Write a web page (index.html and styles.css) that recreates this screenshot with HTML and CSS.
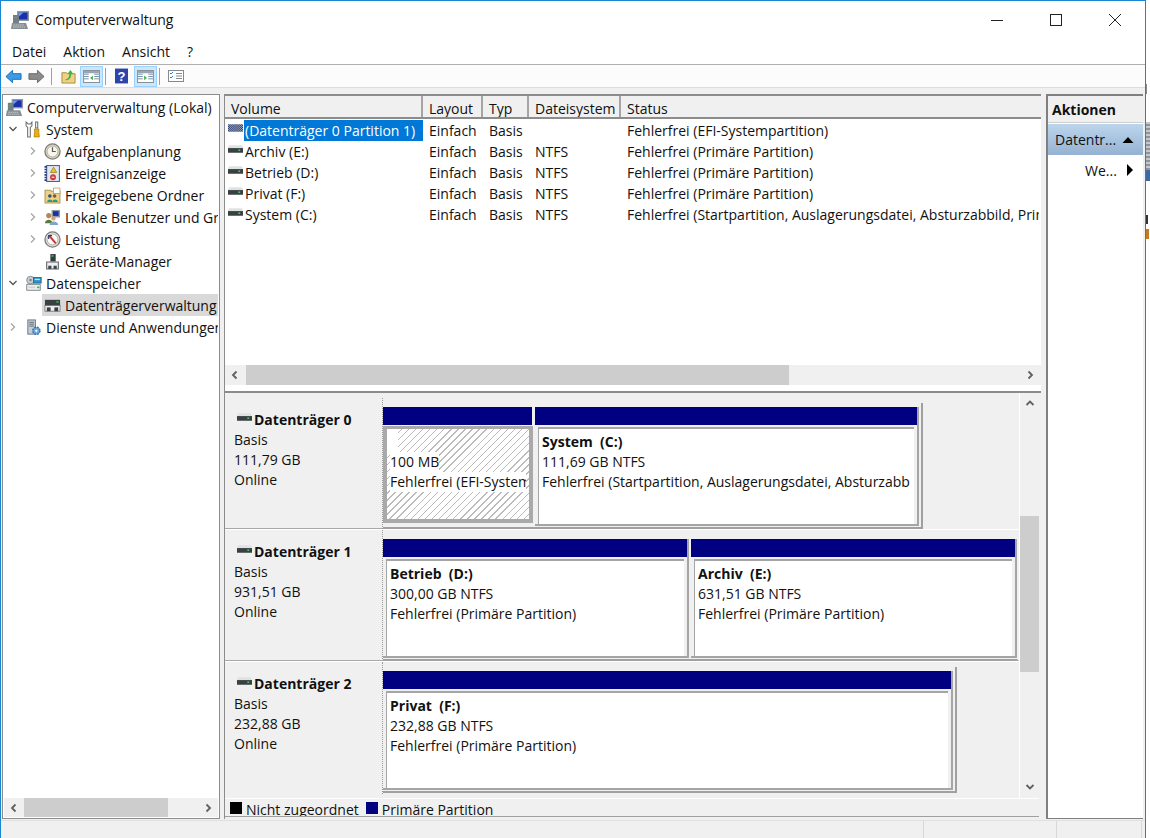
FILE: index.html
```html
<!DOCTYPE html>
<html lang="de">
<head>
<meta charset="utf-8">
<title>Computerverwaltung</title>
<link rel="stylesheet" href="styles.css">
</head>
<body>
<svg class="defs" width="0" height="0">
  <defs>
    <symbol id="i-comp" viewBox="0 0 20 20">
      <rect x="7" y="1" width="12" height="10" fill="#8c9aa8"/>
      <rect x="8.500" y="2.500" width="9" height="7" fill="#1c2fa8"/>
      <path d="M8.500 2.500h5l-5 4.500z" fill="#6f9be6"/>
      <rect x="3" y="5" width="6" height="9" fill="#6f7f84"/>
      <rect x="4" y="7" width="3" height="1" fill="#35c060"/>
      <path d="M2 13h14l2 6H1z" fill="#868d93"/>
      <path d="M3.500 15h11M3 17h12" stroke="#c9ced1" stroke-dasharray="1.500 .7"/>
    </symbol>
    <symbol id="i-tools" viewBox="0 0 16 16">
      <path d="M1 1v3.500l1.500 1.500V15h2.500V6l1.500-1.500V1L5 2.800H3z" fill="#fff" stroke="#6f6f6f"/>
      <path d="M10 1h2v5.500h-2z" fill="#fff" stroke="#6f6f6f"/>
      <path d="M9 7.500h4v3l.5 4.500h-5L9 10.500z" fill="#eeae0e" stroke="#a87f08" stroke-width=".7"/>
    </symbol>
    <symbol id="i-clock" viewBox="0 0 18 18">
      <circle cx="9" cy="9" r="8" fill="#ddd6be" stroke="#7d7d7d" stroke-width="1.400"/>
      <circle cx="9" cy="9" r="5.800" fill="#f7f5ec" stroke="#b5ad90"/>
      <path d="M9 4.500V9h3.500" fill="none" stroke="#4f5f6f" stroke-width="1.300"/>
    </symbol>
    <symbol id="i-event" viewBox="0 0 16 16">
      <rect x="2.500" y=".5" width="12" height="15" fill="#dfe7f3" stroke="#4c5f96"/>
      <path d="M1.500 1v14" stroke="#23356f" stroke-width="2" stroke-dasharray="1.500 1"/>
      <path d="M9 2l3 5H6z" fill="#f2c230" stroke="#9a7a14" stroke-width=".7"/>
      <circle cx="8.500" cy="11.500" r="2.800" fill="#d33a3a"/>
      <path d="M7.200 11.500h2.600" stroke="#fff"/>
    </symbol>
    <symbol id="i-share" viewBox="0 0 16 16">
      <path d="M1 3h5l1 1h8v11H1z" fill="#ecd288" stroke="#b39a52"/>
      <rect x="9" y="1" width="6" height="5" fill="#fff" stroke="#b39a52" stroke-width=".7"/>
      <circle cx="5.500" cy="8.500" r="1.700" fill="#33527f"/>
      <circle cx="10" cy="8.500" r="1.700" fill="#7a5a35"/>
      <path d="M3 14c0-3 5-3 5 0zM8 14c0-3 5-3 5 0z" fill="#2f9a7f"/>
    </symbol>
    <symbol id="i-users" viewBox="0 0 18 18">
      <rect x="8" y="1" width="9" height="8" fill="#8c9aa8"/>
      <rect x="9.500" y="2.300" width="6" height="5" fill="#1c2fa8"/>
      <circle cx="5" cy="7" r="2.700" fill="#b48650"/>
      <path d="M1 15c0-5 8-5 8 0z" fill="#5b7a3a"/>
      <circle cx="10" cy="10" r="2.300" fill="#d2a56f"/>
      <path d="M6 17c0-5 9-5 9 0z" fill="#7fa4cf"/>
    </symbol>
    <symbol id="i-perf" viewBox="0 0 18 18">
      <circle cx="9" cy="9" r="8" fill="#e4e4de" stroke="#7d7d7d" stroke-width="1.400"/>
      <circle cx="9" cy="9" r="5.800" fill="#fbfbf7" stroke="#a5a5a0"/>
      <path d="M5.500 5l7 8" stroke="#d0312d" stroke-width="2"/>
      <path d="M5 8.500V5h3.500" fill="none" stroke="#2a3f7a" stroke-width="1.300"/>
    </symbol>
    <symbol id="i-dev" viewBox="0 0 16 16">
      <rect x="6" y="1" width="5" height="7" fill="#333a40"/>
      <rect x="7" y="2" width="2" height="1.500" fill="#35c060"/>
      <path d="M2.500 8.500h11V15h-11z" fill="#eceeef" stroke="#5f656a"/>
      <rect x="4" y="12" width="3" height="3" fill="#3f454a"/>
      <rect x="9" y="12" width="3" height="3" fill="#3f454a"/>
    </symbol>
    <symbol id="i-store" viewBox="0 0 20 18">
      <circle cx="6.500" cy="5" r="4.500" fill="#c9cfd2" stroke="#7b8388"/>
      <circle cx="6.500" cy="5" r="1.500" fill="#7d878d"/>
      <rect x="10" y="2" width="9" height="6.500" fill="#2c95c8" stroke="#1d6288"/>
      <rect x="11.500" y="3.500" width="6" height="1.500" fill="#b9e2f2"/>
      <path d="M2 10h16v7H2z" fill="#eef0f0" stroke="#6f777c"/>
      <rect x="4" y="12.500" width="8" height="2" fill="#cfd3d5"/>
      <rect x="14" y="12.500" width="3" height="2" fill="#35c060"/>
    </symbol>
    <symbol id="i-disk" viewBox="0 0 16 8">
      <path d="M1 0h14l1 3H0z" fill="#dfe2e3"/>
      <path d="M0 3h16v5H0z" fill="#3a3f42"/>
      <rect x="11" y="4.500" width="2" height="1.500" fill="#3ddc6a"/>
    </symbol>
    <pattern id="p-check" width="2" height="2" patternUnits="userSpaceOnUse">
      <rect width="2" height="2" fill="#aeb6c2"/>
      <rect width="1" height="1" fill="#1d2f6a"/>
      <rect x="1" y="1" width="1" height="1" fill="#1d2f6a"/>
    </pattern>
    <symbol id="i-diskh" viewBox="0 0 16 8">
      <rect width="16" height="8" fill="url(#p-check)"/>
    </symbol>
    <symbol id="i-diskm" viewBox="0 0 18 14">
      <rect x="1" y="1" width="16" height="6" fill="#3a3f42"/>
      <rect x="13" y="2.500" width="2.500" height="1.500" fill="#35c060"/>
      <rect x="1" y="7" width="16" height="6" fill="#eceeef" stroke="#55595c" stroke-width=".7"/>
      <rect x="3" y="9" width="4" height="4" fill="#3a3f42"/>
      <rect x="11" y="9" width="4" height="4" fill="#3a3f42"/>
    </symbol>
    <symbol id="i-serv" viewBox="0 0 16 18">
      <rect x="2" y="1" width="8" height="15" fill="#c5ced6" stroke="#69737c"/>
      <path d="M3.500 3.500h5M3.500 5.500h5M3.500 7.500h5" stroke="#5a6a78"/>
      <circle cx="11" cy="12.500" r="3.800" fill="#6fa8dc" stroke="#3572ab" stroke-width="1.500" stroke-dasharray="2 1"/>
      <circle cx="11" cy="12.500" r="1.200" fill="#fff"/>
    </symbol>
  </defs>
</svg>

<div class="window">
  <header class="titlebar">
    <svg class="title-icon"><use href="#i-comp"/></svg>
    <span class="title-text">Computerverwaltung</span>
    <div class="caption">
      <svg class="cap-btn" viewBox="0 0 14 14"><path d="M1 7.500h12" stroke="#222" fill="none"/></svg>
      <svg class="cap-btn cap-max" viewBox="0 0 14 14"><rect x="1.500" y="1.500" width="11" height="11" stroke="#222" fill="none"/></svg>
      <svg class="cap-btn cap-close" viewBox="0 0 14 14"><path d="M1 1l12 12M13 1L1 13" stroke="#222" fill="none"/></svg>
    </div>
  </header>

  <nav class="menubar">
    <span>Datei</span><span>Aktion</span><span>Ansicht</span><span>?</span>
  </nav>

  <div class="toolbar">
    <svg class="tool" viewBox="0 0 18 18"><path d="M1 9l7-6.500V6h9v6H8v3.500z" fill="#3e9be6" stroke="#1a6fb8"/></svg>
    <svg class="tool" viewBox="0 0 18 18"><path d="M17 9l-7-6.500V6H1v6h9v3.500z" fill="#8b8b8b" stroke="#666"/></svg>
    <i class="tool-sep"></i>
    <svg class="tool tool-up" viewBox="0 0 16 16"><path d="M1 4h5l1 1h8v10H1z" fill="#efd184" stroke="#a58a3e"/><path d="M5 11c2 0 4-2 4-6H7l3-4 3 4h-2c0 4-2 7-6 7z" fill="#3fb04a"/></svg>
    <div class="tool-on"><svg class="pane-icon" viewBox="0 0 18 14"><rect x=".5" y=".5" width="17" height="13" fill="#fff" stroke="#7b8a93"/><path d="M1 1h16v2.500H1z" fill="#9aa7b0"/><path d="M1 4.500h5M1 7h5M1 9.500h5M12 4.500h5M12 7h5M12 9.500h5" stroke="#6e8da5"/><path d="M10.500 6l-3 2.500 3 2.500z" fill="#3fb04a"/></svg></div>
    <i class="tool-sep tool-sep-b"></i>
    <svg class="tool tool-help" viewBox="0 0 14 16"><rect width="14" height="16" fill="#2f44a8"/><text x="7" y="13" class="help-q">?</text></svg>
    <div class="tool-on tool-on-b"><svg class="pane-icon" viewBox="0 0 18 14"><rect x=".5" y=".5" width="17" height="13" fill="#fff" stroke="#7b8a93"/><path d="M1 1h16v2.500H1z" fill="#9aa7b0"/><path d="M1 4.500h5M1 7h5M1 9.500h5M12 4.500h5M12 7h5M12 9.500h5" stroke="#6e8da5"/><path d="M7.500 6l3 2.500-3 2.500z" fill="#3fb04a"/></svg></div>
    <i class="tool-sep tool-sep-c"></i>
    <svg class="tool tool-list" viewBox="0 0 16 12"><rect x=".5" y=".5" width="15" height="11" fill="#fff" stroke="#85898c"/><path d="M8 3.500h6M8 6h6M8 8.500h6" stroke="#85898c"/><path d="M2 3l1 1 2-2M2 7l1 1 2-2" fill="none" stroke="#2a7fd0"/></svg>
  </div>

  <main class="panes">
    <aside class="tree-pane">
      <ul class="tree">
        <li class="row lvl0"><svg class="ic"><use href="#i-comp"/></svg><span>Computerverwaltung (Lokal)</span></li>
        <li class="row lvl1"><svg class="chev" viewBox="0 0 10 10"><path d="M1.500 3l3.500 3.500L8.500 3"/></svg><svg class="ic"><use href="#i-tools"/></svg><span>System</span></li>
        <li class="row lvl2"><svg class="chev chev-l" viewBox="0 0 10 10"><path d="M3 1.500L6.500 5 3 8.500"/></svg><svg class="ic"><use href="#i-clock"/></svg><span>Aufgabenplanung</span></li>
        <li class="row lvl2"><svg class="chev chev-l" viewBox="0 0 10 10"><path d="M3 1.500L6.500 5 3 8.500"/></svg><svg class="ic"><use href="#i-event"/></svg><span>Ereignisanzeige</span></li>
        <li class="row lvl2"><svg class="chev chev-l" viewBox="0 0 10 10"><path d="M3 1.500L6.500 5 3 8.500"/></svg><svg class="ic"><use href="#i-share"/></svg><span>Freigegebene Ordner</span></li>
        <li class="row lvl2"><svg class="chev chev-l" viewBox="0 0 10 10"><path d="M3 1.500L6.500 5 3 8.500"/></svg><svg class="ic"><use href="#i-users"/></svg><span>Lokale Benutzer und Gruppen</span></li>
        <li class="row lvl2"><svg class="chev chev-l" viewBox="0 0 10 10"><path d="M3 1.500L6.500 5 3 8.500"/></svg><svg class="ic"><use href="#i-perf"/></svg><span>Leistung</span></li>
        <li class="row lvl2 no-chev"><svg class="ic"><use href="#i-dev"/></svg><span>Geräte-Manager</span></li>
        <li class="row lvl1"><svg class="chev" viewBox="0 0 10 10"><path d="M1.500 3l3.500 3.500L8.500 3"/></svg><svg class="ic"><use href="#i-store"/></svg><span>Datenspeicher</span></li>
        <li class="row lvl2 no-chev row-sel"><svg class="ic"><use href="#i-diskm"/></svg><span>Datenträgerverwaltung</span></li>
        <li class="row lvl1"><svg class="chev chev-l" viewBox="0 0 10 10"><path d="M3 1.500L6.500 5 3 8.500"/></svg><svg class="ic"><use href="#i-serv"/></svg><span>Dienste und Anwendungen</span></li>
      </ul>
      <div class="hscroll hscroll-tree">
        <svg class="arrow" viewBox="0 0 10 10"><path d="M6.500 1.500L3 5l3.500 3.500"/></svg>
        <div class="track"><div class="thumb thumb-tree"></div></div>
        <svg class="arrow" viewBox="0 0 10 10"><path d="M3.500 1.500L7 5 3.500 8.500"/></svg>
      </div>
    </aside>

    <section class="center">
      <div class="list-pane">
        <div class="list-head cols">
          <div>Volume</div><div>Layout</div><div>Typ</div><div>Dateisystem</div><div>Status</div>
        </div>
        <div class="list-body">
          <div class="cols list-row">
            <div class="vol"><svg class="disk-ic"><use href="#i-diskh"/></svg><span class="vol-name vol-sel">(Datenträger 0 Partition 1)</span></div>
            <div>Einfach</div><div>Basis</div><div></div><div>Fehlerfrei (EFI-Systempartition)</div>
          </div>
          <div class="cols list-row">
            <div class="vol"><svg class="disk-ic"><use href="#i-disk"/></svg><span class="vol-name">Archiv (E:)</span></div>
            <div>Einfach</div><div>Basis</div><div>NTFS</div><div>Fehlerfrei (Primäre Partition)</div>
          </div>
          <div class="cols list-row">
            <div class="vol"><svg class="disk-ic"><use href="#i-disk"/></svg><span class="vol-name">Betrieb (D:)</span></div>
            <div>Einfach</div><div>Basis</div><div>NTFS</div><div>Fehlerfrei (Primäre Partition)</div>
          </div>
          <div class="cols list-row">
            <div class="vol"><svg class="disk-ic"><use href="#i-disk"/></svg><span class="vol-name">Privat (F:)</span></div>
            <div>Einfach</div><div>Basis</div><div>NTFS</div><div>Fehlerfrei (Primäre Partition)</div>
          </div>
          <div class="cols list-row">
            <div class="vol"><svg class="disk-ic"><use href="#i-disk"/></svg><span class="vol-name">System (C:)</span></div>
            <div>Einfach</div><div>Basis</div><div>NTFS</div><div>Fehlerfrei (Startpartition, Auslagerungsdatei, Absturzabbild, Primäre Partition)</div>
          </div>
        </div>
        <div class="hscroll hscroll-list">
          <svg class="arrow" viewBox="0 0 10 10"><path d="M6.500 1.500L3 5l3.500 3.500"/></svg>
          <div class="track"><div class="thumb thumb-list"></div></div>
          <svg class="arrow" viewBox="0 0 10 10"><path d="M3.500 1.500L7 5 3.500 8.500"/></svg>
        </div>
      </div>

      <div class="graph-pane">
        <div class="graph-main">
          <div class="disks">
            <div class="disk">
              <div class="disk-label">
                <div class="disk-title"><svg class="disk-ic"><use href="#i-disk"/></svg><b>Datenträger 0</b></div>
                <div>Basis</div><div>111,79 GB</div><div>Online</div>
              </div>
              <div class="map map-0">
                <div class="part part-efi">
                  <div class="bar"></div>
                  <div class="box box-hatch">
                    <span class="blank"></span>
                    <span class="ln">100 MB</span>
                    <span class="ln ln-clip">Fehlerfrei (EFI-Systempartition)</span>
                  </div>
                </div>
                <div class="part part-c">
                  <div class="bar"></div>
                  <div class="box">
                    <b class="ln">System  (C:)</b>
                    <span class="ln">111,69 GB NTFS</span>
                    <span class="ln ln-clip">Fehlerfrei (Startpartition, Auslagerungsdatei, Absturzabbild, Primäre Partition)</span>
                  </div>
                </div>
              </div>
            </div>
            <div class="disk">
              <div class="disk-label">
                <div class="disk-title"><svg class="disk-ic"><use href="#i-disk"/></svg><b>Datenträger 1</b></div>
                <div>Basis</div><div>931,51 GB</div><div>Online</div>
              </div>
              <div class="map map-1">
                <div class="part part-d">
                  <div class="bar"></div>
                  <div class="box">
                    <b class="ln">Betrieb  (D:)</b>
                    <span class="ln">300,00 GB NTFS</span>
                    <span class="ln">Fehlerfrei (Primäre Partition)</span>
                  </div>
                </div>
                <div class="part part-e">
                  <div class="bar"></div>
                  <div class="box">
                    <b class="ln">Archiv  (E:)</b>
                    <span class="ln">631,51 GB NTFS</span>
                    <span class="ln">Fehlerfrei (Primäre Partition)</span>
                  </div>
                </div>
              </div>
            </div>
            <div class="disk disk-last">
              <div class="disk-label">
                <div class="disk-title"><svg class="disk-ic"><use href="#i-disk"/></svg><b>Datenträger 2</b></div>
                <div>Basis</div><div>232,88 GB</div><div>Online</div>
              </div>
              <div class="map map-2">
                <div class="part part-f">
                  <div class="bar"></div>
                  <div class="box">
                    <b class="ln">Privat  (F:)</b>
                    <span class="ln">232,88 GB NTFS</span>
                    <span class="ln">Fehlerfrei (Primäre Partition)</span>
                  </div>
                </div>
              </div>
            </div>
          </div>
          <div class="vscroll">
            <svg class="arrow" viewBox="0 0 10 10"><path d="M1.500 7L5 3.500 8.500 7"/></svg>
            <div class="vtrack"><div class="vthumb"></div></div>
            <svg class="arrow" viewBox="0 0 10 10"><path d="M1.500 3L5 6.500 8.500 3"/></svg>
          </div>
        </div>
        <div class="legend">
          <i class="swatch sw-black"></i><span class="leg-text">Nicht zugeordnet</span>
          <i class="swatch sw-navy"></i><span class="leg-text">Primäre Partition</span>
        </div>
      </div>
    </section>

    <aside class="actions">
      <div class="act-head">Aktionen</div>
      <div class="act-group"><span>Datentr...</span><svg class="tri" viewBox="0 0 12 8"><path d="M6 1l5.500 6H.5z"/></svg></div>
      <div class="act-item"><span>We...</span><svg class="tri-r" viewBox="0 0 8 12"><path d="M1 0l6 6-6 6z"/></svg></div>
    </aside>
  </main>

  <footer class="statusbar">
    <div class="st st-a"></div><div class="st st-b"></div><div class="st st-c"></div><div class="st st-d"></div>
  </footer>
</div>

<div class="sliver">
  <i class="sl sl-a"></i>
  <i class="sl sl-b"></i>
  <i class="sl sl-c"></i>
  <i class="sl sl-d"></i>
  <i class="sl sl-e"></i>
</div>
</body>
</html>
```

FILE: styles.css
```css
* { box-sizing: border-box; }
html, body { margin: 0; padding: 0; height: 838px; overflow: hidden; }
body {
  background: #fff;
  font-family: "Open Sans", "Noto Sans", sans-serif;
  font-size: 14px;
  color: #111;
  display: flex;
}
.defs { position: absolute; }

.window {
  width: 1146px;
  height: 838px;
  flex: none;
  display: flex;
  flex-direction: column;
  background: #fff;
  border: 1px solid #1a86d0;
  border-bottom: 0;
}

/* desktop visible to the right of the window */
.sliver { flex: 1; display: flex; flex-direction: column; padding-top: 84px; }
.sl { display: block; flex: none; }
.sl-a { height: 10px; width: 1px; background: #8a8a8a; margin-bottom: 28px; }
.sl-b { height: 48px; background: repeating-linear-gradient(#c4c8cc 0 2px, #8d949a 2px 4px); }
.sl-c { height: 11px; background: #3a6aa8; margin-bottom: 34px; }
.sl-d { height: 9px; width: 2px; background: #333; margin-bottom: 5px; }
.sl-e { height: 10px; width: 3px; background: #c87a20; }

/* title bar */
.titlebar { height: 40px; flex: none; display: flex; align-items: center; padding: 0 0 3px 9px; }
.title-icon { width: 20px; height: 20px; flex: none; }
.title-text { margin-left: 5px; font-size: 14px; }
.caption { margin-left: auto; display: flex; align-items: center; padding-right: 23px; gap: 45px; }
.cap-btn { width: 14px; height: 14px; display: block; }

/* menu */
.menubar { height: 24px; flex: none; display: flex; align-items: center; padding: 0 0 3px 11px; gap: 17px; border-bottom: 1px solid #b0b0b0; }

/* toolbar */
.toolbar { height: 23px; flex: none; display: flex; align-items: center; background: #fcfcfc; padding-left: 4px; border-bottom: 1px solid #dcdcdc; }
.tool { width: 17px; height: 17px; flex: none; display: block; margin-right: 6px; }
.tool-sep { width: 1px; height: 17px; background: #a0a0a0; margin: 0 9px 0 0; flex: none; }
.tool-up { width: 15px; height: 15px; margin-right: 4px; }
.tool-on { width: 23px; height: 21px; background: #cfe6fa; border: 1px solid #99d1ff; display: flex; align-items: center; justify-content: center; flex: none; }
.pane-icon { width: 17px; height: 13px; display: block; }
.tool-sep-b { margin: 0 9px 0 2px; }
.tool-help { width: 13px; height: 16px; margin-right: 6px; }
.help-q { font-family: "Liberation Sans", sans-serif; font-size: 14px; font-weight: 700; fill: #fff; text-anchor: middle; }
.tool-sep-c { margin: 0 8px 0 2px; }
.tool-list { width: 16px; height: 12px; margin-right: 0; }

/* panes */
.panes { flex: 1; min-height: 0; display: flex; background: #f0f0f0; padding: 6px 0 1px 1px; gap: 4px; }

.tree-pane { width: 218px; flex: none; display: flex; flex-direction: column; background: #fff; border: 1px solid #8c8c8c; }
.tree { list-style: none; margin: 0; padding: 1px 1px 0 2px; flex: 1; overflow: hidden; }
.row { height: 22px; display: flex; align-items: center; white-space: nowrap; overflow: hidden; }
.lvl0 { padding-left: 0; }
.lvl1 { padding-left: 3px; }
.lvl2 { padding-left: 23px; }
.lvl2.no-chev { padding-left: 39px; }
.chev { width: 10px; height: 10px; flex: none; }
.lvl1 .chev { margin-right: 7px; }
.lvl2 .chev { margin-right: 6px; }
.chev path { fill: none; stroke: #555; stroke-width: 1.300; }
.chev-l path { stroke: #a6a6a6; }
.ic { width: 17px; height: 17px; flex: none; margin-right: 4px; }
.lvl0 .ic { width: 19px; height: 19px; margin-right: 3px; }
.row-sel { background: linear-gradient(#d9d9d9, #d9d9d9) no-repeat 37px 0 / 100% 100%; }

.hscroll { display: flex; align-items: center; background: #f0f0f0; flex: none; }
.arrow { width: 10px; height: 10px; flex: none; }
.arrow path { fill: none; stroke: #606060; stroke-width: 1.800; }
.track { flex: 1; height: 100%; display: flex; }
.thumb { height: 100%; background: #cdcdcd; }
.hscroll-tree { height: 19px; margin: 0 1px 1px 1px; padding: 0 5px; }
.hscroll-tree .track { margin: 0 5px; }
.thumb-tree { width: 144px; }

.center { width: 817px; flex: none; display: flex; flex-direction: column; }

/* volume list */
.list-pane { height: 297px; flex: none; display: flex; flex-direction: column; background: #fff; border-top: 2px solid #8c8c8c; border-left: 1px solid #8c8c8c; }
.cols { display: grid; grid-template-columns: 198px 60px 46px 92px minmax(0, 1fr); }
.cols > div { padding-left: 6px; white-space: nowrap; overflow: hidden; }
.list-head { height: 23px; background: #f0f0f0; border-bottom: 2px solid #8c8c8c; flex: none; align-items: stretch; }
.list-head > div { border-right: 2px solid #a5a5a5; display: flex; align-items: center; padding-top: 3px; }
.list-head > div:last-child { border-right: 0; }
.list-body { flex: 1; padding-top: 1px; min-height: 0; }
.list-row { height: 21px; align-items: center; }
.list-row > div:first-child { padding-left: 0; }
.list-row > div:last-child { margin-right: 2px; }
.vol { display: flex; align-items: center; height: 21px; }
.disk-ic { width: 15px; height: 8px; flex: none; margin: -5px 1px 0 3px; }
.vol-name { height: 21px; display: flex; align-items: center; padding-left: 1px; flex: 1; }
.vol-sel { background: #0078d7; color: #fff; }
.hscroll-list { height: 20px; margin-bottom: 6px; padding: 0 6px 0 5px; }
.hscroll-list .track { margin: 0 6px 0 6px; }
.thumb-list { width: 543px; }

/* disk map */
.graph-pane { flex: 1; min-height: 0; display: flex; flex-direction: column; background: #f0f0f0; border-left: 1px solid #8c8c8c; border-top: 2px solid #8c8c8c; padding: 0 2px 2px 0; }
.graph-main { flex: 1; min-height: 0; display: flex; }
.disks { flex: 1; min-width: 0; padding-top: 5px; }
.disk { height: 132px; display: flex; border-bottom: 1px solid #fff; }
.disk-last { border-bottom: 0; }
.disk-label { width: 158px; flex: none; padding: 11px 0 0 9px; line-height: 20px; border-right: 1px dotted #9a9a9a; border-bottom: 1px solid #a8a8a8; }
.disk-last .disk-label { border-bottom: 0; }
.disk-title { display: flex; align-items: center; height: 21px; }
.disk-title .disk-ic { margin: -6px 2px 0 3px; }
.map { flex: none; display: flex; align-self: flex-start; margin-top: 5px; height: 126px; padding: 4px 2px 0 0; border: solid #a0a0a0; border-width: 0 2px 2px 0; gap: 2px; }
.map-0 { width: 540px; }
.map-1 { width: 636px; border-right-color: #f0f0f0; }
.map-2 { width: 574px; }
.part { display: flex; flex-direction: column; flex: none; min-width: 0; height: 119px; border: solid #a5a5a5; border-width: 0 2px 2px 0; }
.part-efi { width: 150px; border: 0; }
.part-c { width: 384px; }
.part-d { width: 306px; }
.part-e { width: 326px; }
.part-f { width: 570px; }
.bar { height: 18px; flex: none; background: #000080; }
.part-efi .bar { margin-right: 1px; }
.box { height: 97px; margin: 2px 3px 0 3px; flex: none; background: #fff; border-top: 2px solid #a5a5a5; border-left: 1px solid #a5a5a5; padding: 3px 0 0 3px; display: flex; flex-direction: column; line-height: 20px; overflow: hidden; }
.box-hatch { margin: 1px 0 0 0; height: 97px; border: 4px solid #a9a9a9; border-top-width: 3px; padding: 0 0 0 3px; background: repeating-linear-gradient(135deg, #bbb 0 1px, #fff 1px 5px); }
.ln { white-space: pre; display: block; flex: none; }
.ln-clip { overflow: hidden; margin-right: 4px; }
.box-hatch .ln { background: #fff; width: fit-content; }
.box-hatch .ln-clip { width: 136px; margin-right: 0; }
.blank { display: block; height: 23px; width: 11px; margin-left: -3px; background: #fff; flex: none; }

.vscroll { width: 20px; flex: none; display: flex; flex-direction: column; align-items: center; border-left: 1px solid #fff; padding: 3px 0 4px; }
.vscroll .arrow { margin: 2px 0; }
.vtrack { flex: 1; width: 100%; padding-top: 106px; }
.vthumb { height: 156px; background: #cdcdcd; }

.legend { height: 19px; flex: none; display: flex; align-items: flex-start; padding-left: 5px; border-top: 1px solid #fff; border-bottom: 1px solid #a0a0a0; line-height: 20px; overflow: hidden; }
.swatch { width: 12px; height: 12px; flex: none; margin-top: 3px; display: block; }
.sw-black { background: #000; }
.sw-navy { background: #000080; margin-left: 7px; }
.leg-text { margin-left: 4px; padding-top: 1px; white-space: nowrap; }

/* actions */
.actions { width: 97px; margin-left: 1px; flex: none; background: #fff; border: solid #808080; border-width: 2px 0 1px 2px; display: flex; flex-direction: column; }
.act-head { height: 27px; background: #f0f0f0; border-bottom: 1px solid #d0d0d0; font-weight: 700; padding-left: 4px; display: flex; align-items: center; flex: none; }
.act-group { height: 31px; margin-top: 1px; flex: none; background: linear-gradient(#bcd5ec, #95b2d2); display: flex; align-items: center; padding-left: 7px; }
.tri { width: 12px; height: 8px; margin-left: auto; margin-right: 9px; flex: none; }
.act-item { height: 30px; display: flex; align-items: center; padding-left: 37px; flex: none; }
.tri-r { width: 8px; height: 12px; margin-left: 9px; flex: none; }

/* status */
.statusbar { height: 18px; flex: none; display: flex; background: #f0f0f0; border-top: 1px solid #e0e0e0; }
.st { height: 100%; border-right: 1px solid #d8d8d8; }
.st-a { width: 923px; }
.st-b { width: 133px; }
.st-c { width: 85px; }
.st-d { flex: 1; border-right: 0; }
```
